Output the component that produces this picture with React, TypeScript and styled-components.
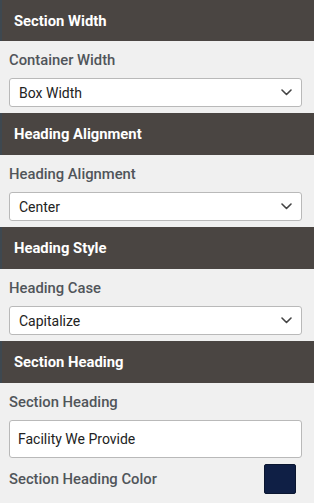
import React from "react";
import styled, { createGlobalStyle } from "styled-components";

const Global = createGlobalStyle`
  html, body { margin: 0; padding: 0; background: #f0f0f0; }
  body { font-family: Roboto, "Liberation Sans", Arial, sans-serif; }
  * { box-sizing: border-box; }
`;

const Panel = styled.div`
  width: 314px;
  display: flex;
  flex-direction: column;
  background: #f0f0f0;
`;

const Header = styled.div<{ $h?: number }>`
  height: ${(p) => p.$h ?? 42}px;
  background: #4a4542;
  border-left: 2px solid #3e4850;
  display: flex;
  align-items: center;
  padding-left: 12px;
  color: #ffffff;
  font-size: 14.8px;
  font-weight: 700;
`;

const Body = styled.div`
  display: flex;
  flex-direction: column;
  padding: 9px 12px 6px 9px;
`;

const Label = styled.div`
  font-size: 14.8px;
  line-height: 20px;
  font-weight: 500;
  color: #50555a;
  margin-bottom: 8px;
`;

const SelectBox = styled.div`
  height: 29px;
  background: #fff;
  border: 1px solid #b9b9b9;
  border-radius: 3px;
  display: flex;
  align-items: center;
  justify-content: space-between;
  padding: 0 9px 0 9px;
  font-size: 14px;
  color: #222;
`;

const InputBox = styled.div`
  height: 38px;
  background: #fff;
  border: 1px solid #b9b9b9;
  border-radius: 3px;
  display: flex;
  align-items: center;
  padding: 0 8px;
  font-size: 14px;
  color: #222;
`;

const ColorRow = styled.div`
  display: flex;
  align-items: center;
  justify-content: space-between;
  margin-top: 6px;
  padding-right: 6px;
`;

const ColorLabel = styled.div`
  font-size: 14.8px;
  font-weight: 500;
  color: #50555a;
`;

const Swatch = styled.div`
  width: 32px;
  height: 30px;
  background: #0f1f45;
  border: 1px solid #0a1630;
  border-radius: 2px;
`;

const Chevron = () => (
  <svg width="11" height="7" viewBox="0 0 11 7" fill="none">
    <path d="M1 1l4.5 4.5L10 1" stroke="#444" strokeWidth="1.6" strokeLinecap="round" strokeLinejoin="round" />
  </svg>
);

const Select = ({ value }: { value: string }) => (
  <SelectBox>
    <span>{value}</span>
    <Chevron />
  </SelectBox>
);

export default function App() {
  return (
    <>
      <Global />
      <Panel>
        <Header $h={41}>Section Width</Header>
        <Body>
          <Label>Container Width</Label>
          <Select value="Box Width" />
        </Body>
        <Header>Heading Alignment</Header>
        <Body>
          <Label>Heading Alignment</Label>
          <Select value="Center" />
        </Body>
        <Header>Heading Style</Header>
        <Body>
          <Label>Heading Case</Label>
          <Select value="Capitalize" />
        </Body>
        <Header>Section Heading</Header>
        <Body>
          <Label>Section Heading</Label>
          <InputBox>Facility We Provide</InputBox>
          <ColorRow>
            <ColorLabel>Section Heading Color</ColorLabel>
            <Swatch />
          </ColorRow>
        </Body>
      </Panel>
    </>
  );
}
